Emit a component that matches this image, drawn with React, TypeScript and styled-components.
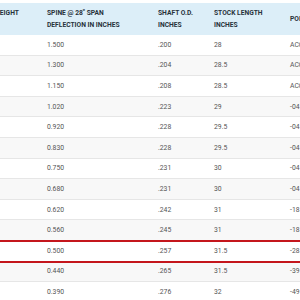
import React from 'react';
import styled, { createGlobalStyle } from 'styled-components';

const GlobalStyle = createGlobalStyle`
  html, body {
    margin: 0;
    padding: 0;
    width: 300px;
    height: 300px;
    overflow: hidden;
    background: #fff;
  }
`;

const COLS = '53px 111px 56px 76px 80px';

const Table = styled.div`
  margin: 3px 0 0 -13px;
  width: 376px;
  font-family: Roboto, 'Liberation Sans', sans-serif;
`;

const HeadRow = styled.div`
  display: grid;
  grid-template-columns: ${COLS};
  height: 32px;
  background-color: #dceef8;
`;

const HeadCell = styled.div`
  display: flex;
  flex-direction: column;
  justify-content: center;
  padding-left: 7px;
  font-size: 6.7px;
  font-weight: 700;
  line-height: 12px;
  color: #28323b;
  text-transform: uppercase;
  white-space: nowrap;
`;

const Row = styled.div<{ $alt?: boolean; $active?: boolean }>`
  display: grid;
  grid-template-columns: ${COLS};
  align-items: center;
  height: 20.6px;
  box-sizing: border-box;
  border-bottom: 1px solid #e6e6e6;
  background-color: ${(p) => (p.$alt ? '#f8f8f8' : '#fff')};
  position: relative;
  z-index: ${(p) => (p.$active ? 1 : 0)};
  outline: ${(p) => (p.$active ? '2px solid #c4161c' : 'none')};
  outline-offset: -1px;
`;

const Cell = styled.div`
  padding-left: 7px;
  font-size: 6.8px;
  color: #555;
  white-space: nowrap;
  overflow: hidden;
`;

const rows = [
  ['1.500', '.200', '28', 'ACC'],
  ['1.300', '.204', '28.5', 'ACC'],
  ['1.150', '.208', '28.5', 'ACC'],
  ['1.020', '.223', '29', '-04'],
  ['0.920', '.228', '29.5', '-04'],
  ['0.830', '.228', '29.5', '-04'],
  ['0.750', '.231', '30', '-04'],
  ['0.680', '.231', '30', '-04'],
  ['0.620', '.242', '31', '-18'],
  ['0.560', '.245', '31', '-18'],
  ['0.500', '.257', '31.5', '-28'],
  ['0.440', '.265', '31.5', '-39'],
  ['0.390', '.276', '32', '-49'],
];

export default function App() {
  return (
    <>
      <GlobalStyle />
      <Table>
        <HeadRow>
          <HeadCell>
            <span>Weight</span>
            <span>&nbsp;</span>
          </HeadCell>
          <HeadCell>
            <span>Spine @ 28" Span</span>
            <span>Deflection in Inches</span>
          </HeadCell>
          <HeadCell>
            <span>Shaft O.D.</span>
            <span>Inches</span>
          </HeadCell>
          <HeadCell>
            <span>Stock Length</span>
            <span>Inches</span>
          </HeadCell>
          <HeadCell>
            <span>Point</span>
          </HeadCell>
        </HeadRow>
        {rows.map((r, i) => (
          <Row key={r[0]} $alt={i % 2 === 1} $active={r[0] === '0.500'}>
            <Cell />
            {r.map((v, j) => (
              <Cell key={j}>{v}</Cell>
            ))}
          </Row>
        ))}
      </Table>
    </>
  );
}
